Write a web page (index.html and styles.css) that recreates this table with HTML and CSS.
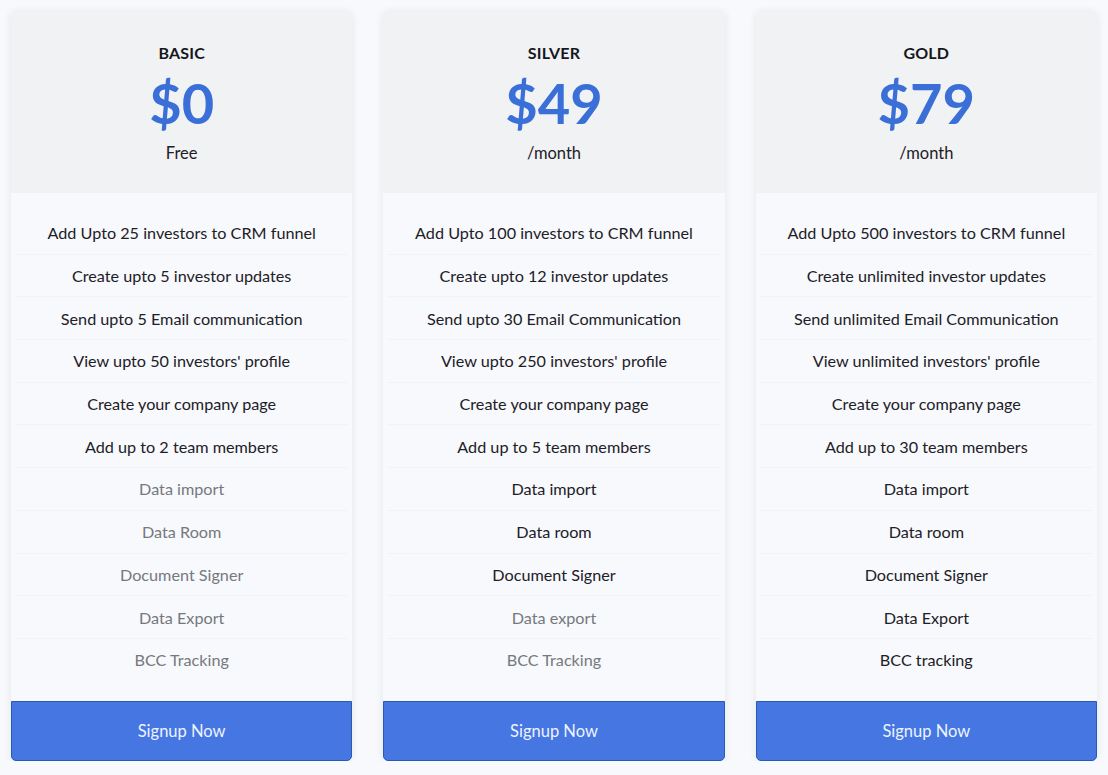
FILE: index.html
```html
<!DOCTYPE html>
<html lang="en">
<head>
<meta charset="utf-8">
<title>Pricing</title>
<link rel="stylesheet" href="styles.css">
</head>
<body>
<main class="plans">
  <section class="card">
    <header class="card-head">
      <h2 class="plan-name">BASIC</h2>
      <div class="price">$0</div>
      <div class="period">Free</div>
    </header>
    <ul class="features">
      <li>Add Upto 25 investors to CRM funnel</li>
      <li>Create upto 5 investor updates</li>
      <li>Send upto 5 Email communication</li>
      <li>View upto 50 investors' profile</li>
      <li>Create your company page</li>
      <li>Add up to 2 team members</li>
      <li class="off">Data import</li>
      <li class="off">Data Room</li>
      <li class="off">Document Signer</li>
      <li class="off">Data Export</li>
      <li class="off">BCC Tracking</li>
    </ul>
    <button class="signup">Signup Now</button>
  </section>
  <section class="card">
    <header class="card-head">
      <h2 class="plan-name">SILVER</h2>
      <div class="price">$49</div>
      <div class="period">/month</div>
    </header>
    <ul class="features">
      <li>Add Upto 100 investors to CRM funnel</li>
      <li>Create upto 12 investor updates</li>
      <li>Send upto 30 Email Communication</li>
      <li>View upto 250 investors' profile</li>
      <li>Create your company page</li>
      <li>Add up to 5 team members</li>
      <li>Data import</li>
      <li>Data room</li>
      <li>Document Signer</li>
      <li class="off">Data export</li>
      <li class="off">BCC Tracking</li>
    </ul>
    <button class="signup">Signup Now</button>
  </section>
  <section class="card">
    <header class="card-head">
      <h2 class="plan-name">GOLD</h2>
      <div class="price">$79</div>
      <div class="period">/month</div>
    </header>
    <ul class="features">
      <li>Add Upto 500 investors to CRM funnel</li>
      <li>Create unlimited investor updates</li>
      <li>Send unlimited Email Communication</li>
      <li>View unlimited investors' profile</li>
      <li>Create your company page</li>
      <li>Add up to 30 team members</li>
      <li>Data import</li>
      <li>Data room</li>
      <li>Document Signer</li>
      <li>Data Export</li>
      <li>BCC tracking</li>
    </ul>
    <button class="signup">Signup Now</button>
  </section>
</main>
</body>
</html>
```
FILE: styles.css
```css
* { box-sizing: border-box; }
html, body {
  margin: 0;
  background: #f7f9fc;
}
body {
  font-family: Lato, "Open Sans", sans-serif;
  color: #1d2027;
}
.plans {
  display: grid;
  grid-template-columns: repeat(3, 1fr);
  gap: 31px;
  padding: 12px 11px 0;
}
.card {
  display: flex;
  flex-direction: column;
  background: #f7f9fc;
  border-radius: 5px;
  box-shadow: 0 0 8px rgba(30, 40, 60, 0.09);
}
.card-head {
  background: #f1f2f3;
  height: 181px;
  border-radius: 5px 5px 0 0;
  text-align: center;
  padding-top: 31px;
}
.plan-name {
  margin: 0;
  font-size: 16px;
  font-weight: 700;
  line-height: 20px;
  color: #15171c;
  letter-spacing: 0.2px;
}
.price {
  margin-top: 10px;
  font-size: 56px;
  font-weight: 700;
  line-height: 60px;
  color: #3b6fd8;
}
.period {
  margin-top: 10px;
  font-size: 16.5px;
  line-height: 20px;
  color: #1d2027;
}
.features {
  list-style: none;
  margin: 0;
  padding: 18px 4px 20px;
  flex: 1;
}
.features li {
  height: 42.7px;
  display: flex;
  align-items: center;
  justify-content: center;
  font-size: 16.2px;
  color: #1d2027;
}
.features li + li {
  border-top: 1px solid #f1f3f6;
}
.features li.off {
  color: #76787d;
}
.signup {
  display: block;
  width: 100%;
  height: 60px;
  border: 1px solid #2c58b5;
  border-radius: 0 0 5px 5px;
  background: #4576e1;
  color: #eef4ff;
  font-family: inherit;
  font-size: 16.5px;
  cursor: pointer;
}
```
